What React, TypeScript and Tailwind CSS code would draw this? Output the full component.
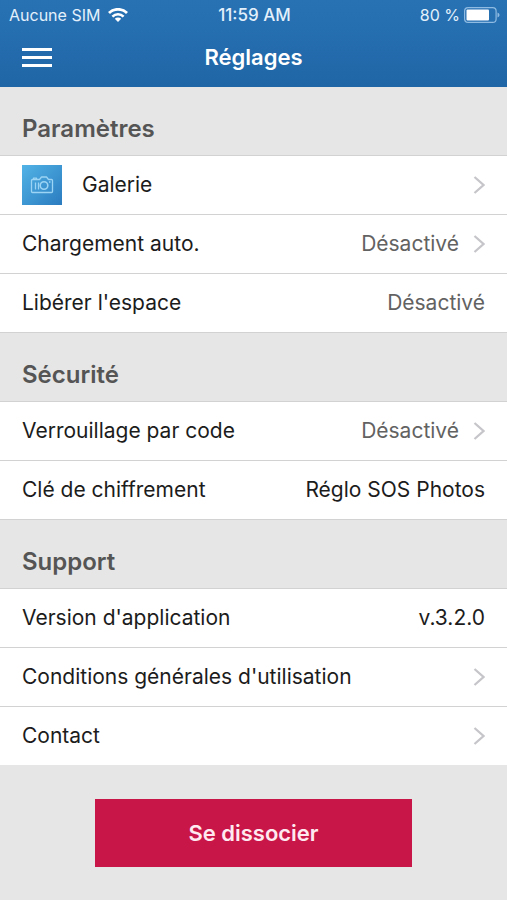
import React from "react";

type RowProps = {
  label: string;
  value?: string;
  dark?: boolean;
  link?: boolean;
  icon?: React.ReactNode;
};

const Wifi = () => (
  <svg width="20" height="14" viewBox="0 0 20 14" fill="none" stroke="#fff">
    <path d="M1 5a12.800 12.800 0 0 1 18 0" strokeWidth="2.800" />
    <path d="M4.400 8.600a7.900 7.900 0 0 1 11.200 0" strokeWidth="2.500" />
    <path d="M10 14 6.800 10.800a4.600 4.600 0 0 1 6.400 0Z" fill="#fff" stroke="none" />
  </svg>
);

const Battery = () => (
  <svg width="36" height="16" viewBox="0 0 36 16" fill="none">
    <rect x=".6" y=".6" width="31.500" height="14.800" rx="3.500" stroke="#8fbbe2" strokeWidth="1.200" />
    <rect x="2.500" y="2.500" width="22.500" height="11" rx="1" fill="#fff" />
    <path d="M33.500 5.500v5c1.200-.4 2-1.300 2-2.500s-.8-2.100-2-2.500Z" fill="#8fbbe2" />
  </svg>
);

const Chevron = () => (
  <svg width="12" height="18" viewBox="0 0 12 18" fill="none" className="shrink-0">
    <path d="M1.500 1 10.500 9l-9 8" stroke="#c6c6ca" strokeWidth="2.300" />
  </svg>
);

const GalleryIcon = () => (
  <span className="flex size-10 shrink-0 items-center justify-center bg-linear-to-br from-[#52b3e6] to-[#2b7cbf]">
    <svg
      width="24"
      height="18"
      viewBox="0 0 24 18"
      fill="none"
      stroke="#9bd4f4"
      strokeWidth="1.300"
      strokeLinejoin="round"
    >
      <path d="M2.500 3.500h7L11.500 1h5l2 2.500h3q1 0 1 1v11q0 1-1 1h-19q-1 0-1-1v-11q0-1 1-1Z" />
      <path d="M5.500 6.500v7M8.500 13.500v-7" />
      <path d="M3.500 3.500V2.200h3v1.300" />
      <circle cx="14" cy="9.500" r="3.800" strokeWidth="1.600" />
      <path d="M19 6h1.500" />
    </svg>
  </span>
);

const Row = ({ label, value, dark, link, icon }: RowProps) => {
  const content = (
    <>
      {icon}
      <span className="grow">{label}</span>
      {value && (
        <span className={dark ? "text-[#1c1c1c]" : "text-[#626262]"}>{value}</span>
      )}
      {link && <Chevron />}
    </>
  );
  return (
    <li className="border-t border-[#d2d2d2]">
      {link ? (
        <a
          href="#"
          className={`flex min-h-[58px] items-center px-[22px] ${icon ? "gap-5" : "gap-[14px]"}`}
        >
          {content}
        </a>
      ) : (
        <div className="flex min-h-[58px] items-center gap-[14px] px-[22px]">
          {content}
        </div>
      )}
    </li>
  );
};

const Section = ({ title, children }: { title: string; children: React.ReactNode }) => (
  <section className="group">
    <h2 className="px-[22px] pt-[27px] pb-[11px] text-2xl leading-[30px] font-semibold text-[#555]">
      {title}
    </h2>
    <ul className="border-b border-[#d2d2d2] bg-white text-[21px] leading-7 text-[#1c1c1c] group-last-of-type:border-[#e6e6e6]">
      {children}
    </ul>
  </section>
);

const App = () => {
  return (
    <div className="min-h-screen bg-[#e6e6e6] font-['Inter','Liberation_Sans',sans-serif]">
      <header className="bg-linear-to-b from-[#2872b4] to-[#1f66a6] text-white">
        <div className="grid grid-cols-[1fr_auto_1fr] items-center pt-1 pr-[7px] pl-[9px] text-base leading-[22px] text-[#e3f0fb]">
          <div className="flex items-center gap-2">
            <span>Aucune SIM</span>
            <Wifi />
          </div>
          <span className="text-[17px] font-medium">11:59 AM</span>
          <div className="flex items-center justify-end gap-1">
            <span>80 %</span>
            <Battery />
          </div>
        </div>
        <div className="grid grid-cols-[1fr_auto_1fr] items-center px-[22px] pt-[16px] pb-[15px]">
          <button aria-label="Menu" className="flex w-[30px] flex-col gap-[5px]">
            <span className="h-[3px] bg-white" />
            <span className="h-[3px] bg-white" />
            <span className="h-[3px] bg-white" />
          </button>
          <h1 className="text-[22px] leading-[30px] font-semibold">Réglages</h1>
        </div>
      </header>

      <main>
        <Section title="Paramètres">
          <Row label="Galerie" icon={<GalleryIcon />} link />
          <Row label="Chargement auto." value="Désactivé" link />
          <Row label="Libérer l'espace" value="Désactivé" />
        </Section>
        <Section title="Sécurité">
          <Row label="Verrouillage par code" value="Désactivé" link />
          <Row label="Clé de chiffrement" value="Réglo SOS Photos" dark />
        </Section>
        <Section title="Support">
          <Row label="Version d'application" value="v.3.2.0" dark />
          <Row label="Conditions générales d'utilisation" link />
          <Row label="Contact" link />
        </Section>
        <div className="flex justify-center px-[95px] py-[33px]">
          <button className="w-full bg-[#c91648] py-[19px] text-[22px] leading-[30px] font-semibold text-[#ffe9f0]">
            Se dissocier
          </button>
        </div>
      </main>
    </div>
  );
};

export default App;
